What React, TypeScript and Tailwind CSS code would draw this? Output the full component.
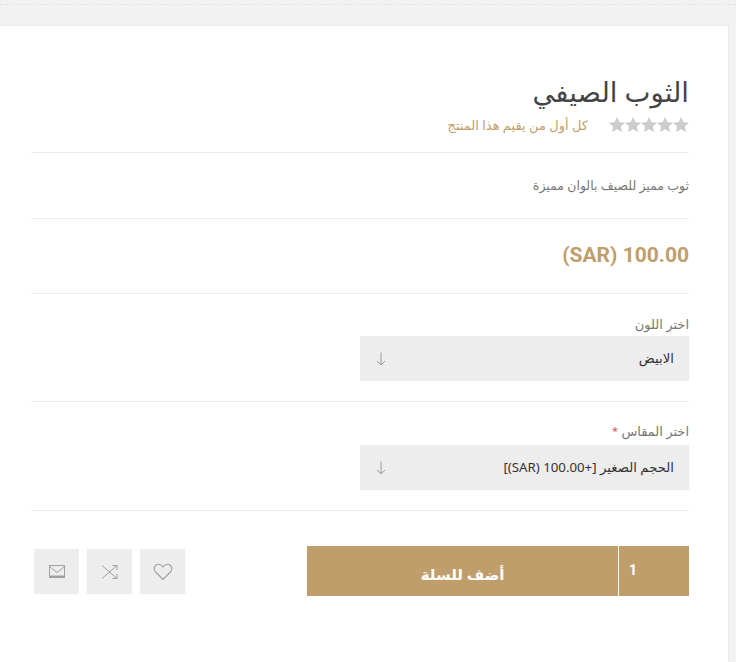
import React from "react";

const Chevron = () => (
  <svg width="10" height="14" viewBox="0 0 10 14" fill="none" stroke="#9a9a9a" strokeWidth="1">
    <path d="M5 0.5V13M1 9l4 4 4-4" />
  </svg>
);

const Star = () => (
  <svg width="16" height="15" viewBox="0 0 16 15" fill="#cccccc">
    <path d="M8 0l2.400 5 5.600.7-4.100 3.800 1.100 5.500L8 12.300 3 15l1.100-5.500L0 5.700 5.600 5z" />
  </svg>
);

function Select({ text }: { text: string }) {
  return (
    <div className="w-[329px] h-[45px] bg-[#ededed] flex items-center justify-between pr-[15px] pl-[16px] text-[13.250px] text-[#333333]">
      <span>{text}</span>
      <Chevron />
    </div>
  );
}

export default function App() {
  return (
    <div
      dir="rtl"
      className="w-[736px] h-[662px] overflow-hidden bg-[#f2f2f2] pt-[4px] font-['Noto_Sans','DejaVu_Sans',sans-serif]"
    >
      <div className="border-t border-dashed border-[#e4e4e4]" />
      <div className="mt-[20px] mr-[7px] w-[729px] h-[640px] bg-white border border-l-0 border-[#ebebeb] pt-[48px] pr-[39px] pl-[31px]">
        <div className="h-[79px] border-b border-[#ebebeb]">
          <h1 className="text-[27.500px] leading-[36px] text-[#444444] font-normal">الثوب الصيفي</h1>
          <div className="flex items-center mt-[4px] h-[20px]">
            <div className="flex">
              <Star /><Star /><Star /><Star /><Star />
            </div>
            <span className="mr-[21px] pt-[3px] text-[13px] text-[#c19e6b]">كل أول من يقيم هذا المنتج</span>
          </div>
        </div>
        <div className="h-[66px] border-b border-[#ebebeb] flex items-center pt-[2px] text-[12.500px] text-[#777777]">
          ثوب مميز للصيف بالوان مميزة
        </div>
        <div dir="ltr" className="h-[75px] border-b border-[#ebebeb] flex items-center justify-end font-['Roboto',sans-serif] font-bold text-[21px] text-[#bf9e6b]">
          (SAR) 100.00
        </div>
        <div className="h-[108px] border-b border-[#ebebeb] pt-[20px]">
          <div className="text-[13px] leading-[20px] text-[#777777] mb-[2px]">اختر اللون</div>
          <Select text="الابيض" />
        </div>
        <div className="h-[109px] border-b border-[#ebebeb] pt-[19px]">
          <div className="text-[13px] leading-[20px] text-[#777777] mb-[4px]">
            اختر المقاس <span className="text-[11px] align-top text-[#d9534f]">*</span>
          </div>
          <Select text="الحجم الصغير [+100.00 (SAR)]" />
        </div>
        <div className="flex justify-between mt-[35px]">
          <div className="flex w-[382px] h-[50px] bg-[#bf9e6b] text-white">
            <div className="w-[71px] border-l border-white flex items-center justify-end pl-[10px] pt-[0px] pb-[1px] text-[14px] font-bold font-['Roboto',sans-serif]">1</div>
            <div className="flex-1 flex items-center justify-center pt-[7px] text-[15px] font-bold">أضف للسلة</div>
          </div>
          <div className="flex gap-[8px] ml-[3px] mt-[3px]">
            <div className="w-[45px] h-[45px] bg-[#ededed] flex items-center justify-center">
              <svg width="20" height="18" viewBox="0 0 20 18" fill="none" stroke="#a0a0a0" strokeWidth="1.100">
                <path d="M10 16.500L2.600 9C.5 6.800.8 3.700 2.800 2.200 5 .6 8.300 1.200 10 4c1.700-2.800 5-3.400 7.200-1.800 2 1.500 2.300 4.600.2 6.800z" />
              </svg>
            </div>
            <div className="w-[45px] h-[45px] bg-[#ededed] flex items-center justify-center">
              <svg width="16" height="14" viewBox="0 0 16 14" fill="none" stroke="#a0a0a0" strokeWidth="1">
                <path d="M0 .5l15 13M0 13.500L15 .5M10.500 .5H15V5M15 9v4.500h-4.500" />
              </svg>
            </div>
            <div className="w-[45px] h-[45px] bg-[#ededed] flex items-center justify-center">
              <svg width="16" height="13" viewBox="0 0 16 13" fill="none" stroke="#a0a0a0" strokeWidth="1">
                <rect x=".5" y=".5" width="15" height="12" />
                <path d="M.5 1.500L8 7.500l7.500-6" />
                <path d="M.5 11.500h15" strokeWidth="2" />
              </svg>
            </div>
          </div>
        </div>
      </div>
    </div>
  );
}
